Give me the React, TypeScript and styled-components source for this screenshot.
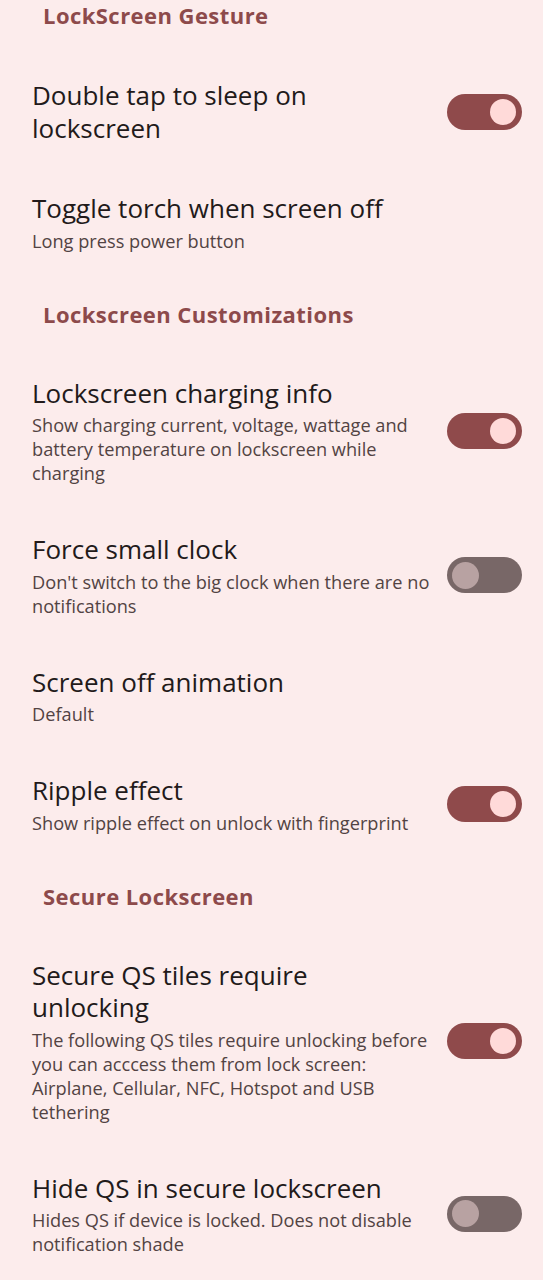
import React from 'react';
import styled, { createGlobalStyle } from 'styled-components';

const GlobalStyle = createGlobalStyle`
    body {
        margin: 0;
        background: #fcecec;
        font-family: "Open Sans", Roboto, sans-serif;
    }
`;

interface IPref {
    title: string
    summary?: string
    toggle?: boolean
    width?: number
}
interface ISection {
    header: string
    items: IPref[]
}

const sections: ISection[] = [
    {
        header: 'LockScreen Gesture',
        items: [
            {title: 'Double tap to sleep on lockscreen', toggle: true, width: 300},
            {title: 'Toggle torch when screen off', summary: 'Long press power button'},
        ]
    },
    {
        header: 'Lockscreen Customizations',
        items: [
            {title: 'Lockscreen charging info', summary: 'Show charging current, voltage, wattage and battery temperature on lockscreen while charging', toggle: true},
            {title: 'Force small clock', summary: "Don't switch to the big clock when there are no notifications", toggle: false},
            {title: 'Screen off animation', summary: 'Default'},
            {title: 'Ripple effect', summary: 'Show ripple effect on unlock with fingerprint', toggle: true},
        ]
    },
    {
        header: 'Secure Lockscreen',
        items: [
            {title: 'Secure QS tiles require unlocking', summary: 'The following QS tiles require unlocking before you can acccess them from lock screen: Airplane, Cellular, NFC, Hotspot and USB tethering', toggle: true, width: 300},
            {title: 'Hide QS in secure lockscreen', summary: 'Hides QS if device is locked. Does not disable notification shade', toggle: false},
        ]
    },
];

const Screen = styled.div`
    display: flex;
    flex-direction: column;
    min-height: 1280px;
    background: #fcecec;
`;

const Header = styled.div<{first: boolean}>`
    padding: ${props => props.first ? '0 20px 24px' : '23px 20px 23px'} 43px;
    font-size: 22px;
    line-height: 30px;
    font-weight: 700;
    letter-spacing: 0.45px;
    color: #8d4a4b;
`;

const Row = styled.div`
    display: flex;
    align-items: center;
    padding: 25px 21px 23px 32px;
    gap: 12px;
`;

const Texts = styled.div`
    flex: 1;
    display: flex;
    flex-direction: column;
`;

const Title = styled.div<{maxWidth?: number}>`
    font-size: 26px;
    line-height: 32.5px;
    color: #221a1a;
    max-width: ${props => props.maxWidth ? props.maxWidth + 'px' : 'none'};
`;

const Summary = styled.div`
    margin-top: 4px;
    font-size: 18.2px;
    line-height: 24px;
    color: #524343;
`;

const Track = styled.div<{on: boolean}>`
    flex-shrink: 0;
    width: 75px;
    height: 36px;
    border-radius: 18px;
    background: ${props => props.on ? '#8f4a4b' : '#786767'};
    display: flex;
    align-items: center;
    justify-content: ${props => props.on ? 'flex-end' : 'flex-start'};
    padding: 0 6px 0 5px;
    box-sizing: border-box;
`;

const Thumb = styled.div<{on: boolean}>`
    width: ${props => props.on ? 26 : 27}px;
    height: ${props => props.on ? 26 : 27}px;
    border-radius: 50%;
    background: ${props => props.on ? '#ffdad9' : '#b8a2a2'};
`;

const Switch = ({on}: {on: boolean}) => <Track on={on}>
    <Thumb on={on}/>
</Track>

const App = () => {
    return <Screen>
        <GlobalStyle/>
        {sections.map((section, i) => <React.Fragment key={section.header}>
            <Header first={i === 0}>{section.header}</Header>
            {section.items.map(item =>
                <Row key={item.title}>
                    <Texts>
                        <Title maxWidth={item.width}>{item.title}</Title>
                        {!!item.summary && <Summary>{item.summary}</Summary>}
                    </Texts>
                    {item.toggle !== undefined && <Switch on={item.toggle}/>}
                </Row>
            )}
        </React.Fragment>)}
    </Screen>
}

export default App;
